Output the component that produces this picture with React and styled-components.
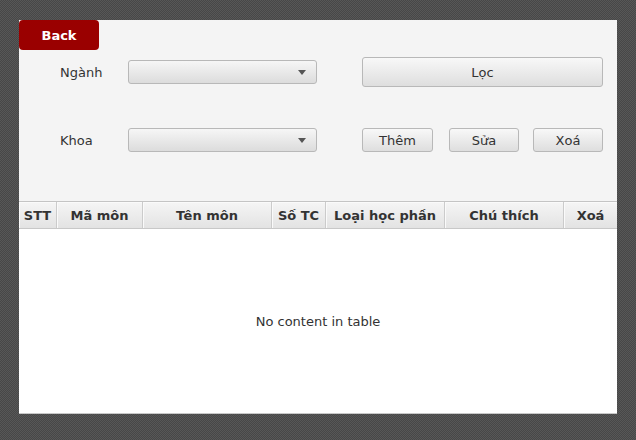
import React from "react";
import styled, { createGlobalStyle } from "styled-components";

const Global = createGlobalStyle`
  html, body { margin: 0; padding: 0; }
  body {
    width: 636px;
    height: 440px;
    overflow: hidden;
    font-family: "DejaVu Sans", "Noto Sans", sans-serif;
    font-size: 13px;
    color: #333;
    background-color: #4f4f4f;
    background-image: repeating-conic-gradient(#474747 0 25%, #575757 0 50%);
    background-size: 2px 2px;
  }
`;

const Page = styled.div`
  padding: 20px 19px;
`;

const Window = styled.div`
  width: 598px;
  height: 394px;
  background: #f4f4f4;
  display: flex;
  flex-direction: column;
`;

const BackButton = styled.button`
  width: 80px;
  height: 30px;
  border: none;
  border-radius: 4px;
  background: #9a0000;
  color: #fff;
  font-family: inherit;
  font-size: 13px;
  font-weight: bold;
  padding: 0;
  cursor: pointer;
`;

const Form = styled.div`
  display: flex;
  flex-direction: column;
  gap: 41px;
  padding: 7px 14px 0 41px;
`;

const Row = styled.div`
  display: flex;
  align-items: center;
  height: ${(p) => p.$h}px;
`;

const Label = styled.div`
  width: 68px;
  color: #333;
`;

const Combo = styled.div`
  width: 189px;
  height: 24px;
  box-sizing: border-box;
  border: 1px solid #b8b8b8;
  border-radius: 3px;
  background: linear-gradient(#f6f6f6, #dcdcdc);
  display: flex;
  align-items: center;
  justify-content: flex-end;
  padding-right: 10px;
`;

const Arrow = styled.span`
  width: 0;
  height: 0;
  border-left: 4px solid transparent;
  border-right: 4px solid transparent;
  border-top: 5px solid #555;
`;

const Actions = styled.div`
  margin-left: 45px;
  width: 241px;
  display: flex;
`;

const Button = styled.button`
  width: ${(p) => p.$w}px;
  height: ${(p) => p.$h}px;
  margin-left: ${(p) => p.$ml || 0}px;
  box-sizing: border-box;
  border: 1px solid #b8b8b8;
  border-radius: 3px;
  background: linear-gradient(#f8f8f8, #dedede);
  color: #333;
  font-family: inherit;
  font-size: 13px;
  padding: 0;
`;

const Table = styled.div`
  margin-top: 49px;
  flex: 1;
  display: flex;
  flex-direction: column;
  background: #fff;
  border-top: 1px solid #c4c4c4;
  border-bottom: 1px solid #c8c8c8;
`;

const Header = styled.div`
  display: flex;
  height: 26px;
  border-bottom: 1px solid #c8c8c8;
  background: linear-gradient(#f5f5f5, #e3e3e3);
`;

const HeadCell = styled.div`
  width: ${(p) => p.$w}px;
  box-sizing: border-box;
  border-right: 1px solid #cbcbcb;
  box-shadow: inset 1px 1px 0 #fafafa;
  display: flex;
  align-items: center;
  justify-content: center;
  font-weight: bold;
  color: #333;
  white-space: nowrap;
  &:last-child { border-right: none; }
`;

const Body = styled.div`
  flex: 1;
  display: flex;
  align-items: center;
  justify-content: center;
  color: #333;
`;

const columns = [
  ["STT", 38],
  ["Mã môn", 86],
  ["Tên môn", 129],
  ["Số TC", 54],
  ["Loại học phần", 119],
  ["Chú thích", 119],
  ["Xoá", 53],
];

export default function App() {
  return (
    <>
      <Global />
      <Page>
        <Window>
          <div>
            <BackButton>Back</BackButton>
          </div>
          <Form>
            <Row $h={30}>
              <Label>Ngành</Label>
              <Combo>
                <Arrow />
              </Combo>
              <Actions>
                <Button $w={241} $h={30}>Lọc</Button>
              </Actions>
            </Row>
            <Row $h={24}>
              <Label>Khoa</Label>
              <Combo>
                <Arrow />
              </Combo>
              <Actions>
                <Button $w={71} $h={24}>Thêm</Button>
                <Button $w={70} $h={24} $ml={16}>Sửa</Button>
                <Button $w={70} $h={24} $ml={14}>Xoá</Button>
              </Actions>
            </Row>
          </Form>
          <Table>
            <Header>
              {columns.map(([t, w]) => (
                <HeadCell key={t} $w={w}>{t}</HeadCell>
              ))}
            </Header>
            <Body>No content in table</Body>
          </Table>
        </Window>
      </Page>
    </>
  );
}
